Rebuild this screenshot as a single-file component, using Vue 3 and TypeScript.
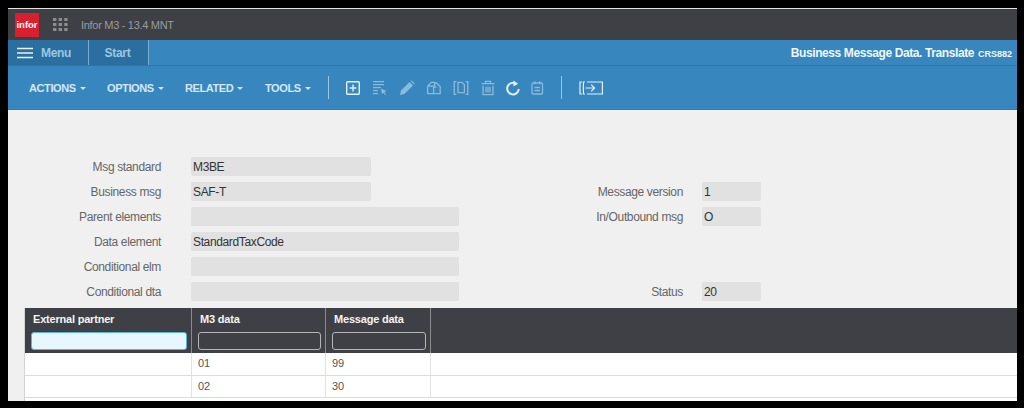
<script setup lang="ts">
interface Field {
  label: string
  value: string
  wide?: boolean
}

const leftFields: Field[] = [
  { label: 'Msg standard', value: 'M3BE' },
  { label: 'Business msg', value: 'SAF-T' },
  { label: 'Parent elements', value: '', wide: true },
  { label: 'Data element', value: 'StandardTaxCode', wide: true },
  { label: 'Conditional elm', value: '', wide: true },
  { label: 'Conditional dta', value: '', wide: true }
]

// right column only has something on some rows
const rightFields: (Field | null)[] = [
  null,
  { label: 'Message version', value: '1' },
  { label: 'In/Outbound msg', value: 'O' },
  null,
  null,
  { label: 'Status', value: '20' }
]

const menus = ['ACTIONS', 'OPTIONS', 'RELATED', 'TOOLS']

const rows = [
  { partner: '', m3: '01', msg: '99' },
  { partner: '', m3: '02', msg: '30' }
]
</script>

<template>
  <div class="frame">
    <div class="window">
      <header class="topbar">
        <div class="logo">infor</div>
        <svg class="grid-icon" width="15" height="15" viewBox="0 0 15 15">
          <g fill="#8b8c90">
            <rect x="0" y="1" width="3.4" height="3" /><rect x="5.6" y="1" width="3.4" height="3" /><rect x="11.2" y="1" width="3.4" height="3" />
            <rect x="0" y="6" width="3.4" height="3" /><rect x="5.6" y="6" width="3.4" height="3" /><rect x="11.2" y="6" width="3.4" height="3" />
            <rect x="0" y="11" width="3.4" height="3" /><rect x="5.6" y="11" width="3.4" height="3" /><rect x="11.2" y="11" width="3.4" height="3" />
          </g>
        </svg>
        <span class="app-name">Infor M3 - 13.4 MNT</span>
      </header>

      <nav class="tabbar">
        <div class="tab menu-tab">
          <svg width="16" height="12" viewBox="0 0 16 12">
            <path d="M0 1.5h16M0 6h16M0 10.5h16" stroke="#e8f2f8" stroke-width="1.6" />
          </svg>
          <span>Menu</span>
        </div>
        <div class="tab start-tab">Start</div>
        <div class="page-title">Business Message Data. Translate <small>CRS882</small></div>
      </nav>

      <div class="toolbar">
        <div v-for="m in menus" :key="m" class="tool-menu">
          {{ m }}<i class="caret"></i>
        </div>
        <div class="sep first-sep"></div>
        <div class="icons">
          <svg width="16" height="16" viewBox="0 0 16 16" fill="none" stroke="#e6f0f7" stroke-width="1.4">
            <rect x="1.7" y="1.7" width="12.6" height="12.6" rx="1" />
            <path d="M8 4.6v6.8M4.6 8h6.8" />
          </svg>
          <svg class="dim" width="16" height="16" viewBox="0 0 16 16" fill="none" stroke="#a9cde3" stroke-width="1.2">
            <path d="M1 1.6h11M1 4.6h11M1 7.6h8M1 10.6h5M1 13.6h5" />
            <path d="M9 8.500l5.500 2.600-2.200.9 1.800 2.400-1 .7-1.800-2.300-1.300 1.800z" fill="#a9cde3" stroke="none" />
          </svg>
          <svg class="dim" width="16" height="16" viewBox="0 0 16 16">
            <path d="M1 15l1-4.400L10.600 2l3.400 3.400-8.600 8.600zM11.600 1l1-.6 3.200 3.200-.6 1z" fill="#a9cde3" />
          </svg>
          <svg class="dim" width="16" height="16" viewBox="0 0 16 16" fill="none" stroke="#a9cde3" stroke-width="1.3">
            <path d="M1.600 6.200L5.400 2.400h3.200v4M1.600 6.200v7.400h6M1.600 6.200h7" />
            <path d="M8.600 3.200h2.200l3.400 3.400v7H7.600V7.200h3" />
          </svg>
          <svg class="dim" width="16" height="16" viewBox="0 0 16 16" fill="none" stroke="#a9cde3" stroke-width="1.3">
            <path d="M3.400 1.600H1.200v12.800h2.200M12.600 1.600h2.200v12.800h-2.200" />
            <path d="M5 2.400h4l2.400 2.400v7.800H5z" />
          </svg>
          <svg class="dim" width="16" height="16" viewBox="0 0 16 16" fill="none" stroke="#a9cde3" stroke-width="1.3">
            <path d="M1.500 3.600h13M5.600 3.400V1.300h4.800v2.100M3 5.600v9.100h10V5.600M6 6.800v5.800M8 6.800v5.800M10 6.800v5.800" />
          </svg>
          <svg class="tight" width="16" height="16" viewBox="0 0 16 16" fill="none" stroke="#e6f0f7" stroke-width="2">
            <path d="M11.800 4.200A5.800 5.800 0 1 0 13.800 9" />
            <path d="M8.400 0.600l4.600 3.200-4.600 2.800z" fill="#e6f0f7" stroke="none" />
          </svg>
          <svg class="dim tight" width="16" height="16" viewBox="0 0 16 16" fill="none" stroke="#a9cde3" stroke-width="1.3">
            <rect x="2" y="3" width="10.500" height="11" rx="1" />
            <path d="M4.800 1.200v3M9.700 1.200v3M4.500 7.500h5.500M4.500 10.500h5.500" />
          </svg>
        </div>
        <div class="sep last-sep"></div>
        <svg class="switch-icon" width="25" height="16" viewBox="0 0 25 16" fill="none" stroke="#e6f0f7" stroke-width="1.2">
          <path d="M3 2H1v12h2M6 2H4.400v12H6M8 2h15.400v12H8" />
          <path d="M6.500 8h9M12.200 4.600L15.600 8l-3.400 3.400" />
        </svg>
      </div>

      <main class="content">
        <section class="form">
          <template v-for="(f, i) in leftFields" :key="f.label">
            <label class="label">{{ f.label }}</label>
            <div class="left-cell">
              <div class="input" :class="{ wide: f.wide }">{{ f.value }}</div>
            </div>
            <template v-if="rightFields[i]">
              <label class="label">{{ rightFields[i]?.label }}</label>
              <div class="right-cell">
                <div class="input">{{ rightFields[i]?.value }}</div>
              </div>
            </template>
            <template v-else>
              <span></span>
              <span></span>
            </template>
          </template>
        </section>

        <section class="table">
          <div class="thead">
            <div class="th col-a">
              <span>External partner</span>
              <div class="filter focused"></div>
            </div>
            <div class="th col-b">
              <span>M3 data</span>
              <div class="filter"></div>
            </div>
            <div class="th col-c">
              <span>Message data</span>
              <div class="filter"></div>
            </div>
          </div>
          <div v-for="r in rows" :key="r.m3" class="tr">
            <div class="td col-a">{{ r.partner }}</div>
            <div class="td col-b">{{ r.m3 }}</div>
            <div class="td col-c">{{ r.msg }}</div>
          </div>
        </section>
      </main>
    </div>
  </div>
</template>

<style>
html, body {
  margin: 0;
  background: #000;
}
</style>

<style scoped>
.frame {
  width: 1024px;
  height: 408px;
  background: #000;
  padding: 8px 7px 7px 8px;
  box-sizing: border-box;
  overflow: hidden;
  font-family: "Liberation Sans", Arial, sans-serif;
  font-size: 12px;
  letter-spacing: -0.36px;
}

.window {
  height: 393px;
  background: #f0f0f0;
  display: flex;
  flex-direction: column;
  overflow: hidden;
}

.topbar {
  height: 32px;
  box-sizing: border-box;
  flex: none;
  border-top: 1px solid #e4e4e4;
  background: #3f4045;
  display: flex;
  align-items: center;
  padding-left: 7px;
}

.logo {
  width: 24px;
  height: 24px;
  background: #d8202f;
  color: #fff;
  font-size: 9.5px;
  font-weight: bold;
  line-height: 24px;
  text-align: center;
  letter-spacing: 0;
}

.grid-icon {
  margin-left: 14px;
}

.app-name {
  margin-left: 13px;
  color: #9a9b9f;
  font-size: 11px;
  letter-spacing: -0.3px;
}

.tabbar {
  height: 26px;
  box-sizing: border-box;
  flex: none;
  background: #3786be;
  border-bottom: 1px solid #2a77ad;
  display: flex;
  align-items: center;
}

.tab {
  height: 25px;
  display: flex;
  align-items: center;
  background: #2a6f9f;
  color: #9cc6e0;
  font-size: 12px;
  font-weight: bold;
  letter-spacing: -0.3px;
  box-sizing: border-box;
}

.menu-tab {
  width: 81px;
  gap: 8px;
  padding-left: 9px;
  border-right: 1px solid #79acd0;
}

.start-tab {
  width: 60px;
  justify-content: center;
  padding-right: 2px;
  border-right: 1px solid #79acd0;
}

.page-title {
  margin-left: auto;
  padding-right: 5px;
  color: #f0f6fa;
  font-size: 12px;
  font-weight: bold;
  letter-spacing: -0.4px;
}

.page-title small {
  font-size: 9px;
  margin-left: 1px;
  letter-spacing: 0;
}

.toolbar {
  height: 44px;
  box-sizing: border-box;
  flex: none;
  background: #3786be;
  border-bottom: 1px solid #2f7fb6;
  display: flex;
  align-items: center;
  padding-left: 21px;
}

.tool-menu {
  color: #d4e6f2;
  font-size: 11px;
  font-weight: bold;
  letter-spacing: -0.4px;
  width: 58px;
  margin-right: 20px;
  white-space: nowrap;
}

.tool-menu:nth-child(3) {
  width: 60px;
}

.tool-menu:nth-child(4) {
  width: 47px;
}

.caret {
  display: inline-block;
  margin-left: 4px;
  vertical-align: 2px;
  border: 3.5px solid transparent;
  border-top: 3.5px solid #d4e6f2;
  border-bottom: 0;
}

.sep {
  width: 1px;
  height: 23px;
  background: #9cc6e0;
}

.first-sep {
  margin-left: -4px;
}

.icons {
  display: flex;
  align-items: center;
  gap: 11px;
  margin-left: 16px;
}

.icons .tight {
  margin-left: -2px;
}

.dim {
  opacity: 0.75;
}

.last-sep {
  margin-left: 15px;
}

.switch-icon {
  margin-left: 17px;
}

.content {
  flex: 1;
  display: flex;
  flex-direction: column;
  padding: 47px 0 0 16px;
  min-height: 0;
}

.form {
  display: grid;
  grid-template-columns: 137px 298px 224px 78px;
  grid-auto-rows: 19px;
  row-gap: 6px;
  align-items: center;
  height: 151px;
}

.label {
  color: #666;
  text-align: right;
  white-space: nowrap;
}

.left-cell {
  padding-left: 30px;
}

.right-cell {
  padding-left: 19px;
}

.input {
  height: 19px;
  line-height: 20px;
  background: #e1e1e1;
  border-radius: 2px;
  color: #333;
  padding-left: 2px;
  box-sizing: border-box;
}

.left-cell .input {
  width: 180px;
}

.left-cell .input.wide {
  width: 268px;
}

.table {
  background: #fff;
  border-left: 1px solid #d4d4d4;
  flex: 1;
}

.thead {
  height: 45px;
  background: #3f4045;
  display: flex;
}

.col-a {
  width: 167px;
}

.col-b {
  width: 134px;
}

.col-c {
  width: 105px;
}

.th {
  box-sizing: border-box;
  border-right: 1px solid #8a8b8e;
  color: #f4f4f4;
  font-size: 11px;
  font-weight: bold;
  letter-spacing: -0.2px;
  padding: 4px 4px 0 6px;
}

.th span {
  display: block;
  padding-left: 2px;
  height: 20px;
  line-height: 14px;
}

.filter {
  height: 18px;
  box-sizing: border-box;
  border: 1px solid #b4b5b7;
  border-radius: 3px;
}

.filter.focused {
  background: #e8f6fd;
  border-color: #5bb4e4;
}

.tr {
  height: 22.5px;
  display: flex;
  box-sizing: border-box;
  border-bottom: 1px solid #dcdcdc;
}

.td {
  box-sizing: border-box;
  border-right: 1px solid #e2e2e2;
  color: #555;
  font-size: 11px;
  letter-spacing: 0;
  line-height: 21px;
  padding-left: 6px;
}
</style>
